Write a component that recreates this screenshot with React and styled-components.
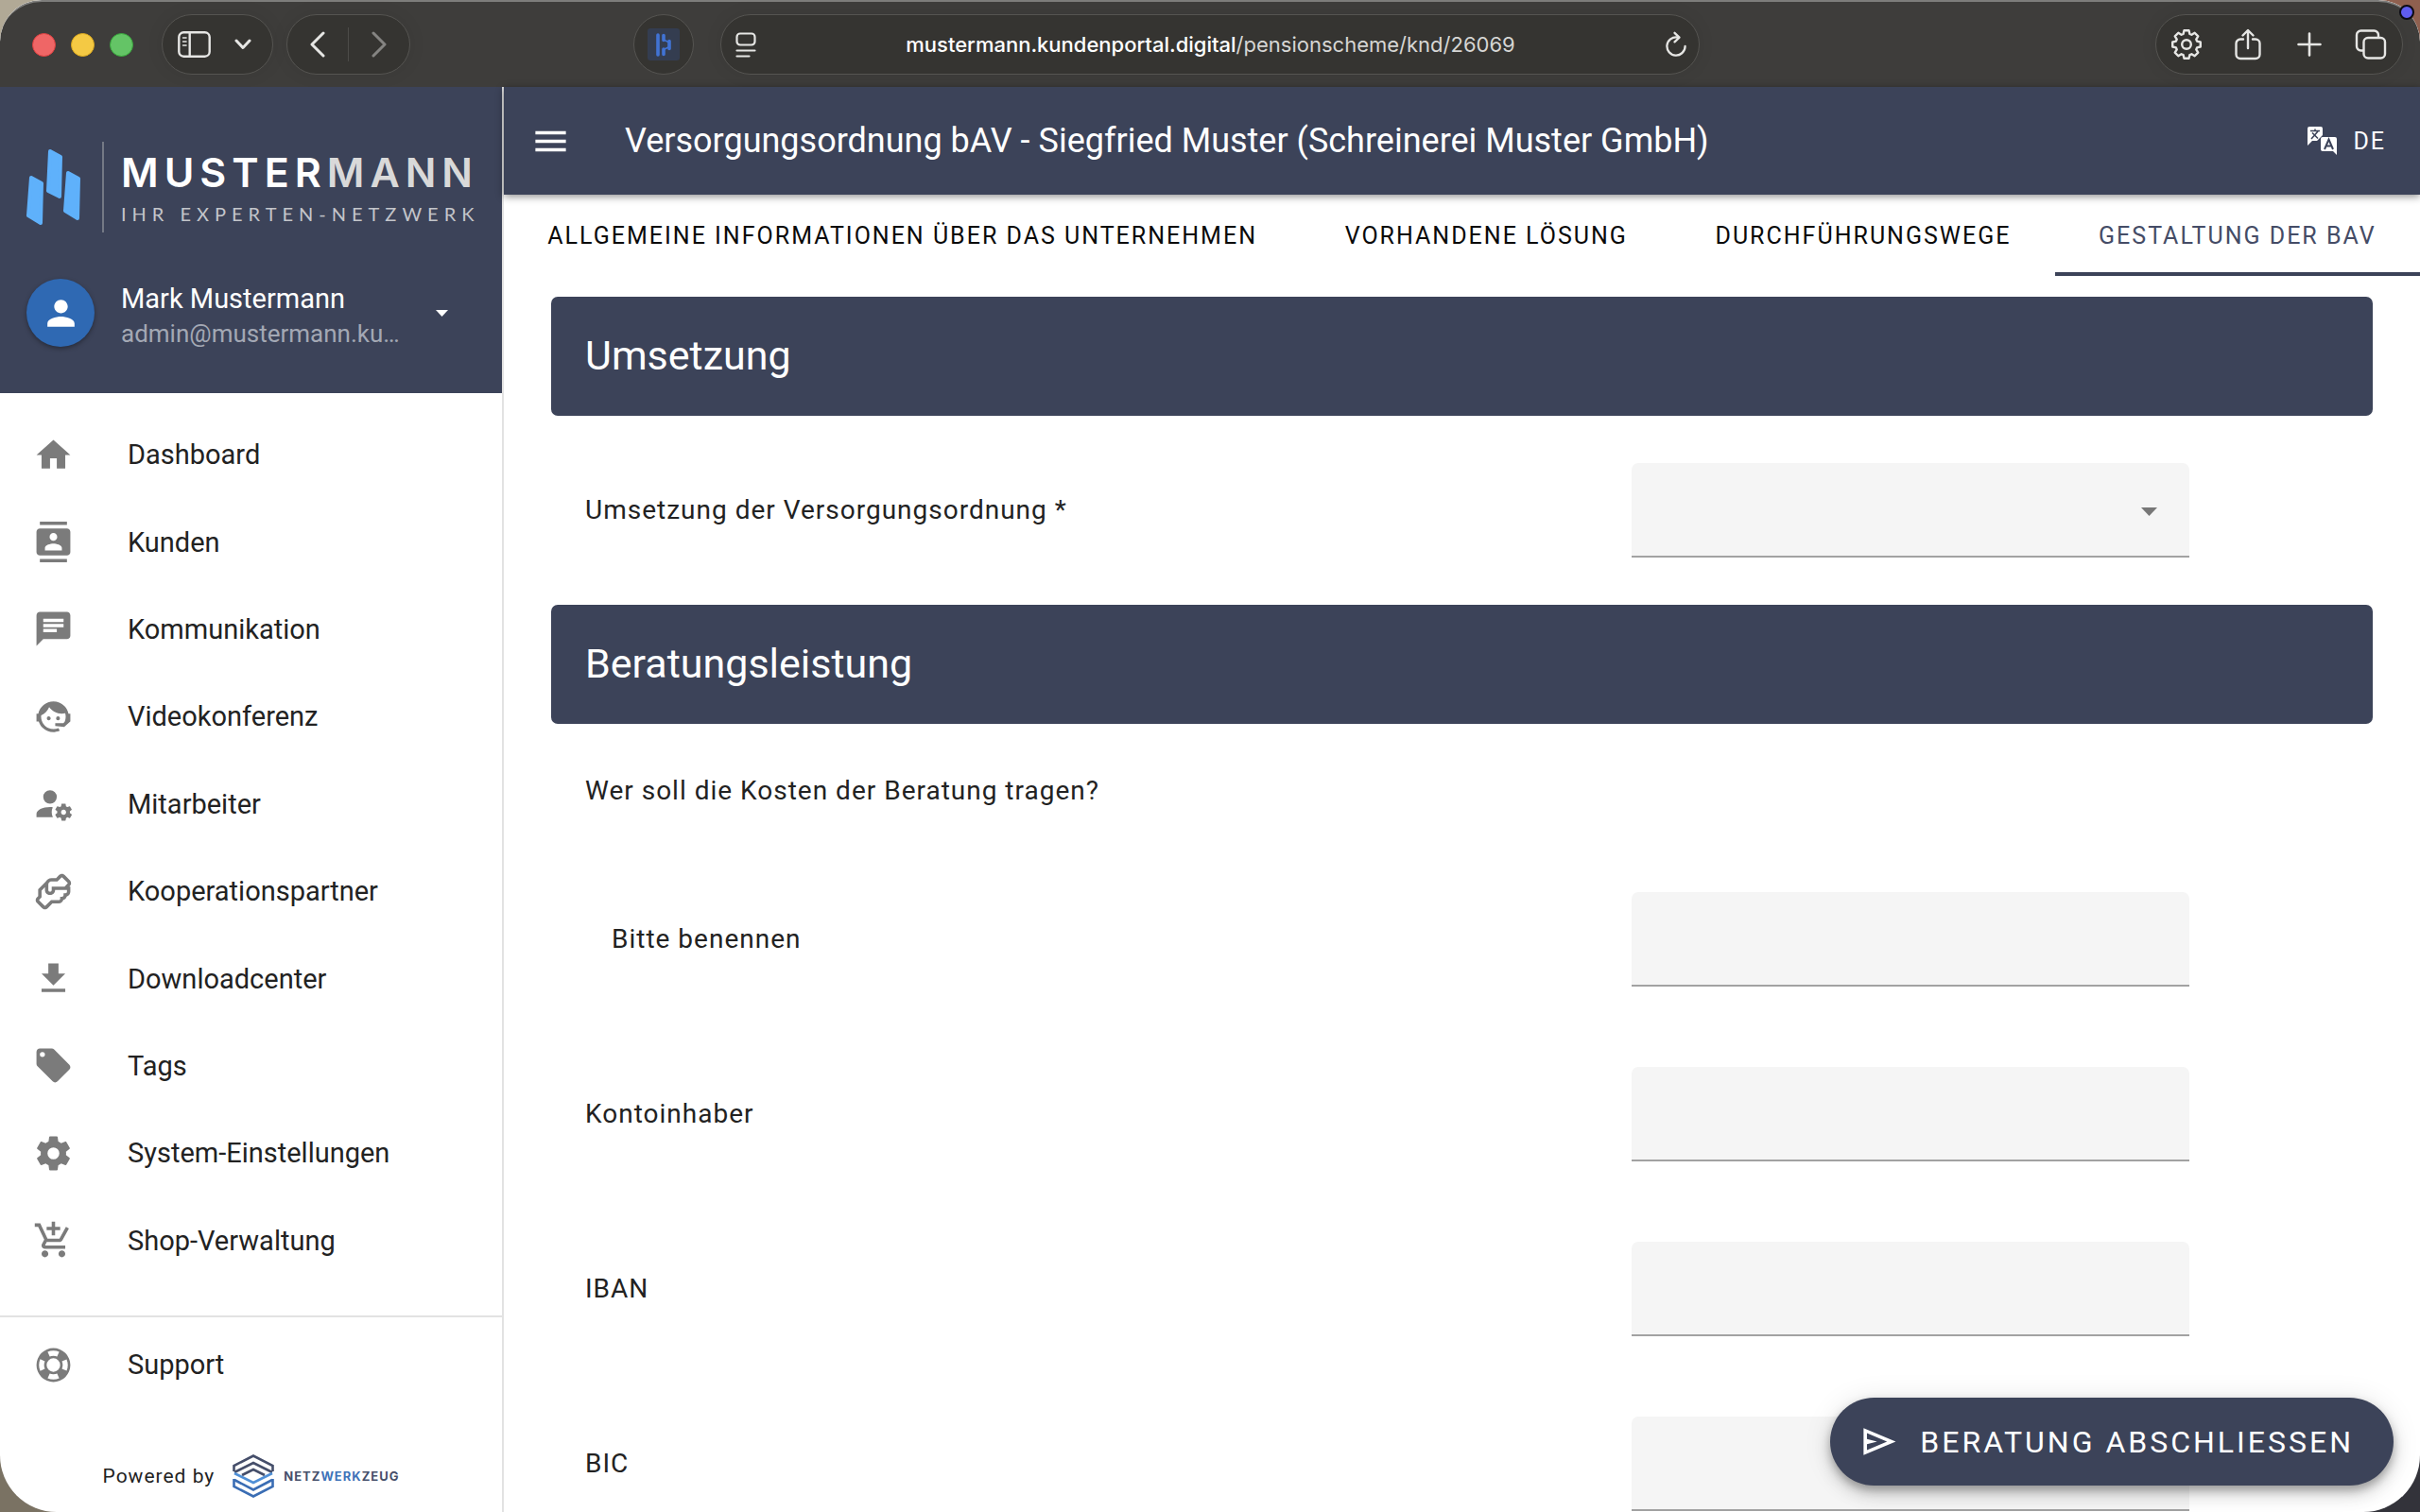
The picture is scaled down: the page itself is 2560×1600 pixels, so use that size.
import React from "react";
import styled, { createGlobalStyle, css } from "styled-components";
import { MdContacts, MdChat, MdAddShoppingCart, MdMenu, MdPerson } from "react-icons/md";

const navy = "#3c4359";
const ink = "#222222";
const iconGrey = "#7b7b7b";
const chrome = "#3e3d3b";

const GlobalStyle = createGlobalStyle`
  *, *::before, *::after { box-sizing: border-box; }
  body {
    margin: 0;
    background: linear-gradient(90deg, #b1a996 0 50%, #8f604f 50% 100%) top / 100% 50% no-repeat,
      linear-gradient(90deg, #7a7263 0 50%, #33333a 50% 100%) bottom / 100% 50% no-repeat;
    font-family: Roboto, "Liberation Sans", sans-serif;
    color: ${ink};
  }
  svg { flex: none; }
  button, input, select { font: inherit; color: inherit; letter-spacing: inherit; }
  button { border: 0; padding: 0; background: none; cursor: pointer; }
`;

/* ---------- window ---------- */

const Window = styled.div`
  position: relative;
  display: flex;
  flex-direction: column;
  height: 100vh;
  overflow: hidden;
  background: #fff;
  border-radius: 44px 44px 60px 60px;
`;

const RecordingDot = styled.span`
  position: fixed;
  top: 5px;
  right: 6px;
  width: 16px;
  height: 16px;
  border: 2px solid #0b0b14;
  border-radius: 50%;
  background: #5f5cf0;
`;

const BrowserBar = styled.header`
  display: grid;
  grid-template-columns: 1fr minmax(0, 1036px) 1fr;
  align-items: center;
  flex: none;
  height: 92px;
  padding: 0 18px 0 34px;
  background: ${chrome};
  border-top: 2px solid #7d7d7b;
  border-radius: 44px 44px 0 0;
  color: #e6e6e4;
`;

const BarSide = styled.div`
  display: flex;
  align-items: center;
  justify-content: ${(p) => (p.$end ? "flex-end" : "flex-start")};
`;

const Lights = styled.div`
  display: flex;
  gap: 16px;
  margin-right: 30px;
`;

const Light = styled.span`
  width: 25px;
  height: 25px;
  border-radius: 50%;
  background: ${(p) => p.$color};
  border: 1px solid ${(p) => p.$edge};
`;

const Pill = styled.div`
  display: flex;
  align-items: center;
  height: 64px;
  padding: ${(p) => p.$pad || "0 16px"};
  gap: ${(p) => p.$gap || 0}px;
  border: 1px solid #555451;
  border-radius: 32px;
  background: #353431;
  box-shadow: 0 0 18px rgba(0, 0, 0, 0.08);
`;

const LeftPill = styled(Pill)`
  margin-right: 14px;
`;

const BarButton = styled.button`
  display: flex;
  justify-content: center;
  min-width: ${(p) => p.$min || 0}px;
  opacity: ${(p) => (p.disabled ? 0.45 : 1)};
`;

const Separator = styled.span`
  width: 1px;
  height: 36px;
  background: #4c4b48;
`;

const Extension = styled.button`
  display: flex;
  align-items: center;
  justify-content: center;
  width: 64px;
  height: 64px;
  margin-left: auto;
  margin-right: 36px;
  border: 1px solid #555451;
  border-radius: 50%;
  background: #353431;
`;

const AddressPill = styled(Pill)`
  justify-content: space-between;
  margin-left: -8px;
  margin-right: 8px;
`;

const Address = styled.button`
  font-family: Inter, "Liberation Sans", sans-serif;
  font-size: 22px;
  line-height: 32px;
  color: #d6d6d4;
  white-space: nowrap;

  b {
    font-weight: 500;
    color: #fff;
  }
`;

const Body = styled.div`
  display: grid;
  grid-template-columns: 533px minmax(0, 1fr);
  flex: 1;
  min-height: 0;
`;

/* ---------- sidebar ---------- */

const Sidebar = styled.aside`
  display: flex;
  flex-direction: column;
  min-height: 0;
  border-right: 2px solid #e2e2e2;
`;

const SidebarHead = styled.div`
  flex: none;
  padding: 58px 20px 50px 28px;
  background: ${navy};
  color: #fff;
`;

const Brand = styled.a`
  display: flex;
  align-items: center;
  height: 96px;
  color: #fff;
  text-decoration: none;
`;

const BrandRule = styled.span`
  flex: none;
  width: 2px;
  height: 96px;
  margin: 0 18px 0 23px;
  background: #747985;
`;

const BrandText = styled.span`
  display: flex;
  flex-direction: column;
  padding-top: 8px;
  font-family: Lato, "Liberation Sans", sans-serif;
  white-space: nowrap;
`;

const BrandName = styled.span`
  font-family: Inter, "Liberation Sans", sans-serif;
  font-size: 43px;
  line-height: 48px;
  letter-spacing: 6px;
  font-weight: 600;

  span { color: #d9d9d9; }
`;

const BrandClaim = styled.span`
  font-size: 20px;
  line-height: 40px;
  letter-spacing: 6px;
  color: #c3c5ca;
`;

const Account = styled.button`
  display: flex;
  align-items: center;
  width: 100%;
  height: 72px;
  margin-top: 49px;
  margin-bottom: -1px;
  text-align: left;
`;

const Avatar = styled.span`
  display: flex;
  align-items: center;
  justify-content: center;
  flex: none;
  width: 72px;
  height: 72px;
  margin-right: 28px;
  border-radius: 50%;
  background: #2f69b3;
  box-shadow: 0 2px 5px rgba(0, 0, 0, 0.35);
`;

const AccountText = styled.span`
  display: flex;
  flex-direction: column;
  width: 300px;
  margin-right: 33px;
  padding-top: 6px;
`;

const AccountName = styled.span`
  font-size: 29px;
  line-height: 38px;
`;

const AccountMail = styled.span`
  font-size: 26px;
  line-height: 36px;
  color: #a3a8b4;
  white-space: nowrap;
`;

const Nav = styled.nav`
  display: grid;
  grid-auto-rows: 1fr;
  flex: 1;
  min-height: 0;
  padding: 19px 0 33px;
`;

const NavLink = styled.a`
  display: flex;
  align-items: center;
  gap: 57px;
  padding-left: 35px;
  font-size: 29px;
  line-height: 40px;
  color: ${ink};
  text-decoration: none;

  svg { color: ${iconGrey}; }
`;

const SidebarFoot = styled.div`
  flex: none;
  border-top: 2px solid #e2e2e2;
  padding: 4px 0 12px;

  ${NavLink} { height: 92px; }
`;

const Powered = styled.div`
  display: flex;
  align-items: center;
  justify-content: center;
  height: 52px;
  margin-top: 46px;
  font-size: 21px;
  letter-spacing: 1px;
  gap: 19px;
`;

const Vendor = styled.a`
  display: flex;
  align-items: center;
  gap: 10px;
  font-family: Inter, "Liberation Sans", sans-serif;
  font-size: 13px;
  font-weight: 700;
  letter-spacing: 1px;
  color: #46506b;
  text-decoration: none;

  span span { color: #3f73b9; }
`;

/* ---------- main ---------- */

const Main = styled.main`
  display: flex;
  flex-direction: column;
  min-width: 0;
  min-height: 0;
`;

const Toolbar = styled.div`
  position: relative;
  display: flex;
  align-items: center;
  flex: none;
  height: 114px;
  padding: 0 36px 0 28px;
  background: ${navy};
  color: #fff;
  box-shadow: 0 2px 8px rgba(0, 0, 0, 0.45);
`;

const MenuButton = styled.button`
  display: flex;
  margin-right: 57px;
  color: #fff;
`;

const PageTitle = styled.h1`
  flex: 1;
  margin: 0;
  font-size: 36px;
  font-weight: 400;
  line-height: 48px;
`;

const Language = styled.button`
  display: flex;
  align-items: center;
  gap: 16px;
  font-size: 25px;
  letter-spacing: 2px;
  color: #fff;
`;

const Tabs = styled.div`
  display: flex;
  flex: none;
  height: 86px;
`;

const Tab = styled.button`
  flex: 1 0 auto;
  padding: 4px 40px 0;
  border-bottom: 4px solid transparent;
  font-size: 25px;
  letter-spacing: 2px;
  text-transform: uppercase;
  white-space: nowrap;
  color: #0a0a0a;

  ${(p) =>
    p["aria-selected"] &&
    css`
      color: #454c66;
      border-bottom-color: ${navy};
    `}
`;

const Form = styled.form`
  flex: 1;
  min-height: 0;
  overflow: hidden;
  padding: 22px 50px 0;
`;

const SectionTitle = styled.h2`
  margin: 0;
  padding: 34px 36px 36px;
  border-radius: 7px;
  background: ${navy};
  color: #fff;
  font-size: 43px;
  font-weight: 400;
  line-height: 56px;
`;

const Row = styled.div`
  display: grid;
  grid-template-columns: 1107fr 590fr 194fr;
  align-items: center;
  height: ${(p) => p.$height}px;
  padding-left: 36px;
  font-size: 28px;
  line-height: 40px;
  letter-spacing: 1px;
`;

const Label = styled.label`
  padding-left: ${(p) => (p.$nested ? 28 : 0)}px;
`;

const Question = styled.p`
  margin: 0;
  padding-top: 6px;
`;

const fieldBox = css`
  width: 100%;
  height: 100px;
  padding: 0 28px;
  border: 0;
  border-bottom: 2px solid #a2a2a2;
  border-radius: 7px 7px 0 0;
  background: #f5f5f5;
  outline: none;
`;

const TextField = styled.input`
  ${fieldBox}
`;

const SelectWrap = styled.div`
  position: relative;

  svg {
    position: absolute;
    top: 47px;
    right: 34px;
    pointer-events: none;
  }
`;

const Select = styled.select`
  ${fieldBox}
  appearance: none;
`;

const FinishButton = styled.button`
  position: absolute;
  right: 28px;
  bottom: 28px;
  display: flex;
  align-items: center;
  gap: 22px;
  height: 93px;
  padding: 0 42px 0 30px;
  border-radius: 47px;
  background: ${navy};
  color: #fff;
  font-size: 32px;
  letter-spacing: 3px;
  text-transform: uppercase;
  box-shadow: 0 5px 9px rgba(0, 0, 0, 0.25), 0 10px 18px rgba(0, 0, 0, 0.14), 0 2px 30px rgba(0, 0, 0, 0.1);
`;

/* ---------- drawings ---------- */

const Glyph = ({ d, size = 43 }) => (
  <svg width={size} height={size} viewBox="0 0 24 24" fill="currentColor" aria-hidden="true">
    <path d={d} />
  </svg>
);

const paths = {
  home: "M10,20V14H14V20H19V12H22L12,3L2,12H5V20H10Z",
  agent:
    "M18.72,14.76C19.07,13.91 19.26,13 19.26,12C19.26,11.28 19.15,10.59 18.96,9.95C18.31,10.1 17.63,10.18 16.92,10.18C13.86,10.18 11.15,8.67 9.5,6.34C8.61,8.5 6.91,10.26 4.77,11.22C4.73,11.47 4.73,11.74 4.73,12A7.27,7.27 0 0,0 12,19.27C13.05,19.27 14.06,19.04 14.97,18.63C15.54,19.72 15.8,20.26 15.78,20.26C14.14,20.81 12.87,21.08 12,21.08C9.58,21.08 7.27,20.13 5.57,18.42C4.53,17.38 3.76,16.11 3.33,14.73H2V10.18H3.09C3.93,6.04 7.6,2.92 12,2.92C14.4,2.92 16.71,3.87 18.42,5.58C19.69,6.84 20.54,8.45 20.89,10.18H22V14.67H22V14.69L22,14.73H21.94L18.38,18L13.08,17.4V15.73H17.91L18.72,14.76M9.27,11.77C9.57,11.77 9.86,11.89 10.07,12.11C10.28,12.32 10.4,12.61 10.4,12.91C10.4,13.21 10.28,13.5 10.07,13.71C9.86,13.92 9.57,14.04 9.27,14.04C8.64,14.04 8.13,13.54 8.13,12.91C8.13,12.28 8.64,11.77 9.27,11.77M14.72,11.77C15.35,11.77 15.85,12.28 15.85,12.91C15.85,13.54 15.35,14.04 14.72,14.04C14.09,14.04 13.58,13.54 13.58,12.91A1.14,1.14 0 0,1 14.72,11.77Z",
  staff:
    "M10 4A4 4 0 0 0 6 8A4 4 0 0 0 10 12A4 4 0 0 0 14 8A4 4 0 0 0 10 4M17 12C16.87 12 16.76 12.09 16.74 12.21L16.55 13.53C16.25 13.66 15.96 13.82 15.7 14L14.46 13.5C14.35 13.5 14.22 13.5 14.15 13.63L13.15 15.36C13.09 15.47 13.11 15.6 13.21 15.68L14.27 16.5C14.25 16.67 14.24 16.83 14.24 17C14.24 17.17 14.25 17.33 14.27 17.5L13.21 18.32C13.12 18.4 13.09 18.53 13.15 18.64L14.15 20.37C14.21 20.5 14.34 20.5 14.46 20.5L15.7 20C15.96 20.18 16.24 20.35 16.55 20.47L16.74 21.79C16.76 21.91 16.86 22 17 22H19C19.11 22 19.22 21.91 19.24 21.79L19.43 20.47C19.73 20.34 20 20.18 20.27 20L21.5 20.5C21.63 20.5 21.76 20.5 21.83 20.37L22.83 18.64C22.89 18.53 22.86 18.4 22.77 18.32L21.7 17.5C21.72 17.33 21.74 17.17 21.74 17C21.74 16.83 21.73 16.67 21.7 16.5L22.76 15.68C22.85 15.6 22.88 15.47 22.82 15.36L21.82 13.63C21.76 13.5 21.63 13.5 21.5 13.5L20.27 14C20 13.82 19.73 13.65 19.42 13.53L19.23 12.21C19.22 12.09 19.11 12 19 12H17M10 14C5.58 14 2 15.79 2 18V20H11.68A7 7 0 0 1 11 17A7 7 0 0 1 11.64 14.09C11.11 14.03 10.56 14 10 14M18 15.5C18.83 15.5 19.5 16.17 19.5 17C19.5 17.83 18.83 18.5 18 18.5C17.16 18.5 16.5 17.83 16.5 17C16.5 16.17 17.17 15.5 18 15.5Z",
  handshake:
    "M21.71 8.71C22.96 7.46 22.39 6 21.71 5.29L18.71 2.29C17.45 1.04 16 1.61 15.29 2.29L13.59 4H11C9.1 4 8 5 7.44 6.15L3 10.59V14.59L2.29 15.29C1.04 16.55 1.61 18 2.29 18.71L5.29 21.71C5.83 22.25 6.41 22.45 6.96 22.45C7.67 22.45 8.32 22.1 8.71 21.71L11.41 19H15C16.7 19 17.56 17.94 17.87 16.9C19 16.6 19.62 15.74 19.87 14.9C21.42 14.5 22 13.03 22 12V9H21.41L21.71 8.71M20 12C20 12.45 19.81 13 19 13L18 13L18 14C18 14.45 17.81 15 17 15L16 15L16 16C16 16.45 15.81 17 15 17H10.59L7.31 20.28C7 20.57 6.82 20.4 6.71 20.29L3.72 17.31C3.43 17 3.6 16.82 3.71 16.71L5 15.41V11.41L7 9.41V11C7 12.21 7.8 14 10 14S13 12.21 13 11H20V12M20.29 7.29L18.59 9H11V11C11 11.45 10.81 12 10 12S9 11.45 9 11V8C9 7.54 9.17 6 11 6H14.41L16.69 3.72C17 3.43 17.18 3.6 17.29 3.71L20.28 6.69C20.57 7 20.4 7.18 20.29 7.29Z",
  download: "M5,20H19V18H5M19,9H15V3H9V9H5L12,16L19,9Z",
  tag: "M5.5,7A1.5,1.5 0 0,1 4,5.5A1.5,1.5 0 0,1 5.5,4A1.5,1.5 0 0,1 7,5.5A1.5,1.5 0 0,1 5.5,7M21.41,11.58L12.41,2.58C12.05,2.22 11.55,2 11,2H4C2.89,2 2,2.89 2,4V11C2,11.55 2.22,12.05 2.59,12.41L11.58,21.41C11.95,21.77 12.45,22 13,22C13.55,22 14.05,21.77 14.41,21.41L21.41,14.41C21.78,14.05 22,13.55 22,13C22,12.44 21.77,11.94 21.41,11.58Z",
  cog: "M12,15.5A3.5,3.5 0 0,1 8.5,12A3.5,3.5 0 0,1 12,8.5A3.5,3.5 0 0,1 15.5,12A3.5,3.5 0 0,1 12,15.5M19.43,12.97C19.47,12.65 19.5,12.33 19.5,12C19.5,11.67 19.47,11.34 19.43,11L21.54,9.37C21.73,9.22 21.78,8.95 21.66,8.73L19.66,5.27C19.54,5.05 19.27,4.96 19.05,5.05L16.56,6.05C16.04,5.66 15.5,5.32 14.87,5.07L14.5,2.42C14.46,2.18 14.25,2 14,2H10C9.75,2 9.54,2.18 9.5,2.42L9.13,5.07C8.5,5.32 7.96,5.66 7.44,6.05L4.95,5.05C4.73,4.96 4.46,5.05 4.34,5.27L2.34,8.73C2.21,8.95 2.27,9.22 2.46,9.37L4.57,11C4.53,11.34 4.5,11.67 4.5,12C4.5,12.33 4.53,12.65 4.57,12.97L2.46,14.63C2.27,14.78 2.21,15.05 2.34,15.27L4.34,18.73C4.46,18.95 4.73,19.03 4.95,18.95L7.44,17.94C7.96,18.34 8.5,18.68 9.13,18.93L9.5,21.58C9.54,21.82 9.75,22 10,22H14C14.25,22 14.46,21.82 14.5,21.58L14.87,18.93C15.5,18.67 16.04,18.34 16.56,17.94L19.05,18.95C19.27,19.03 19.54,18.95 19.66,18.73L21.66,15.27C21.78,15.05 21.73,14.78 21.54,14.63L19.43,12.97Z",
  lifebuoy:
    "M19.79,15.41C20.74,13.24 20.74,10.75 19.79,8.59L17.05,9.83C17.65,11.21 17.65,12.78 17.06,14.17L19.79,15.41M15.42,4.21C13.25,3.26 10.76,3.26 8.59,4.21L9.83,6.94C11.22,6.35 12.79,6.35 14.18,6.95L15.42,4.21M4.21,8.58C3.26,10.76 3.26,13.24 4.21,15.42L6.95,14.17C6.35,12.79 6.35,11.21 6.95,9.82L4.21,8.58M8.59,19.79C10.76,20.74 13.25,20.74 15.42,19.78L14.18,17.05C12.8,17.65 11.22,17.65 9.84,17.06L8.59,19.79M12,2A10,10 0 0,1 22,12A10,10 0 0,1 12,22A10,10 0 0,1 2,12A10,10 0 0,1 12,2M12,8A4,4 0 0,0 8,12A4,4 0 0,0 12,16A4,4 0 0,0 16,12A4,4 0 0,0 12,8Z",
  send: "M3 20V4L22 12L3 20M5 17L16.85 12L5 7V10.5L11 12L5 13.5V17Z",
};

const Stroke = ({ w, h, width = 3, children }) => (
  <svg
    width={w}
    height={h}
    viewBox={`0 0 ${w} ${h}`}
    fill="none"
    stroke="currentColor"
    strokeWidth={width}
    strokeLinecap="round"
    strokeLinejoin="round"
    aria-hidden="true"
  >
    {children}
  </svg>
);

const PanelIcon = () => (
  <Stroke w={35} h={28} width={2.4}>
    <rect x="1.3" y="1.3" width="32.4" height="25.4" rx="5" />
    <path d="M12.7 1.5v25" />
    <path d="M5.6 7h3.4M5.6 11h3.4M5.6 15h3.4" strokeWidth="1.6" />
  </Stroke>
);

const ReaderIcon = () => (
  <Stroke w={22} h={27} width={2.2}>
    <rect x="1.5" y="1.5" width="19" height="12" rx="3.5" />
    <path d="M1.5 19.5h19M1.5 25.5h13" />
  </Stroke>
);

const ReloadIcon = () => (
  <Stroke w={24} h={28} width={2.3}>
    <path d="M13.5 6.5A9.6 9.6 0 1 0 21.6 16" />
    <path d="M10.5 1.8l5 4.8-5 4.8" />
  </Stroke>
);

const GearIcon = () => {
  const points = [];
  const teeth = 8;
  for (let i = 0; i < teeth; i += 1) {
    [[-0.3, 11.6], [-0.17, 15], [0.17, 15], [0.3, 11.6]].forEach(([offset, r]) => {
      const a = (i / teeth) * Math.PI * 2 + offset;
      points.push(`${(17 + r * Math.sin(a)).toFixed(2)},${(17 - r * Math.cos(a)).toFixed(2)}`);
    });
  }
  return (
    <Stroke w={34} h={34} width={2.4}>
      <polygon points={points.join(" ")} />
      <circle cx="17" cy="17" r="4.8" />
    </Stroke>
  );
};

const ShareIcon = () => (
  <Stroke w={28} h={34} width={2.4}>
    <path d="M9 11.5H6a4.5 4.5 0 0 0-4.5 4.5v11.5a4.5 4.5 0 0 0 4.5 4.5h16a4.5 4.5 0 0 0 4.5-4.5v-11.5a4.5 4.5 0 0 0-4.5-4.5h-3" />
    <path d="M14 21V2.5M8.5 7.5L14 2l5.5 5.5" />
  </Stroke>
);

const PlusIcon = () => (
  <Stroke w={26} h={26} width={2.6}>
    <path d="M13 1.5v23M1.5 13h23" />
  </Stroke>
);

const WindowsIcon = () => (
  <Stroke w={34} h={32} width={2.4}>
    <rect x="9.5" y="9" width="22.5" height="21.5" rx="4.5" />
    <path d="M9 22.5H6.5A4.5 4.5 0 0 1 2 18V6a4.5 4.5 0 0 1 4.5-4.5h14A4.5 4.5 0 0 1 25 6v2.5" />
  </Stroke>
);

const ExtensionMark = () => (
  <svg width="34" height="34" viewBox="0 0 34 34" aria-hidden="true">
    <rect width="34" height="34" rx="3" fill="#343d50" />
    <path
      d="M11 7v21M17 7.5v5M17 22v5.5M23 13.5v8"
      stroke="#4173d4"
      strokeWidth="3.6"
      strokeLinecap="round"
      fill="none"
    />
    <path d="M17 12l6 3M17 22.5l6-3" stroke="#4173d4" strokeWidth="1.5" />
  </svg>
);

const BrandMark = () => (
  <svg width="57" height="84" viewBox="0 0 57 84" fill="#5fb1fb" stroke="#5fb1fb" strokeWidth="4" strokeLinejoin="round" aria-hidden="true">
    <path d="M5 32L16 38L15 80L2 72Z" />
    <path d="M25 4L36 10L35 52L23 46Z" />
    <path d="M44 27L55 33L54 75L41 67Z" />
  </svg>
);

const VendorMark = () => (
  <svg width="44" height="48" viewBox="0 0 44 48" fill="none" strokeWidth="2.6" aria-hidden="true">
    <g stroke="#454e6a">
      <path d="M1.5 19V13L22 2.5L42.5 13V19" />
      <path d="M2 20L22 10L42 20" />
      <path d="M10 23L22 17L34 23" />
    </g>
    <g stroke="#3a6db4">
      <path d="M1.5 27V35L22 45.5L42.5 35V27" />
      <path d="M2 28L22 38.5L42 28" />
      <path d="M2 21L22 31L42 21" stroke="#4f8fd6" />
    </g>
  </svg>
);

const TranslateIcon = () => (
  <svg width="33" height="32" viewBox="0 0 33 32" aria-hidden="true">
    <path d="M3 1H15A2 2 0 0 1 17 3V10L11 16H6L1 21V3A2 2 0 0 1 3 1Z" fill="#fff" />
    <path d="M4 5.5H14M9 3.5V5.5M12 6L5 14M6 7.5L12 13.5" stroke={navy} strokeWidth="1.5" fill="none" />
    <path d="M17 12H30A2 2 0 0 1 32 14V31L28 27H17A2 2 0 0 1 15 25V14A2 2 0 0 1 17 12Z" fill="#fff" />
    <path d="M19 25L23.5 14.5L28 25M20.5 21.5H26.5" stroke={navy} strokeWidth="2" fill="none" />
  </svg>
);

const Caret = ({ w, h, color }) => (
  <svg width={w} height={h} viewBox="0 0 10 5" preserveAspectRatio="none" fill={color} aria-hidden="true">
    <path d="M0 0H10L5 5Z" />
  </svg>
);

/* ---------- content ---------- */

const navItems = [
  ["Dashboard", <Glyph d={paths.home} />],
  ["Kunden", <MdContacts size={43} />],
  ["Kommunikation", <MdChat size={43} />],
  ["Videokonferenz", <Glyph d={paths.agent} />],
  ["Mitarbeiter", <Glyph d={paths.staff} />],
  ["Kooperationspartner", <Glyph d={paths.handshake} />],
  ["Downloadcenter", <Glyph d={paths.download} />],
  ["Tags", <Glyph d={paths.tag} />],
  ["System-Einstellungen", <Glyph d={paths.cog} />],
  ["Shop-Verwaltung", <MdAddShoppingCart size={43} />],
];

const tabs = [
  "Allgemeine Informationen über das Unternehmen",
  "Vorhandene Lösung",
  "Durchführungswege",
  "Gestaltung der bAV",
];

const fields = [
  { id: "benennen", label: "Bitte benennen", nested: true },
  { id: "kontoinhaber", label: "Kontoinhaber" },
  { id: "iban", label: "IBAN" },
  { id: "bic", label: "BIC" },
];

export default function App() {
  return (
    <>
      <GlobalStyle />
      <Window>
        <BrowserBar>
          <BarSide>
            <Lights>
              <Light $color="#ef6666" $edge="#dc4040" />
              <Light $color="#f4c944" $edge="#dba91f" />
              <Light $color="#64c466" $edge="#38a83c" />
            </Lights>
            <LeftPill $pad="0 22px 0 16px" $gap={25}>
              <BarButton aria-label="Seitenleiste"><PanelIcon /></BarButton>
              <BarButton aria-label="Tabgruppen">
                <Stroke w={18} h={12}><path d="M2 2l7 7.5 7-7.5" /></Stroke>
              </BarButton>
            </LeftPill>
            <Pill $pad="0 24px" $gap={24}>
              <BarButton aria-label="Zurück">
                <Stroke w={16} h={28}><path d="M14 2L2 14l12 12" /></Stroke>
              </BarButton>
              <Separator />
              <BarButton aria-label="Vorwärts" disabled>
                <Stroke w={16} h={28}><path d="M2 2l12 12L2 26" /></Stroke>
              </BarButton>
            </Pill>
            <Extension aria-label="Erweiterung"><ExtensionMark /></Extension>
          </BarSide>
          <AddressPill $pad="0 12px 0 15px">
            <BarButton aria-label="Seitenmenü"><ReaderIcon /></BarButton>
            <Address><b>mustermann.kundenportal.digital</b>/pensionscheme/knd/26069</Address>
            <BarButton aria-label="Neu laden"><ReloadIcon /></BarButton>
          </AddressPill>
          <BarSide $end>
            <Pill $pad="0 16px 0 15px" $gap={31}>
              <BarButton $min={34} aria-label="Einstellungen"><GearIcon /></BarButton>
              <BarButton $min={34} aria-label="Teilen"><ShareIcon /></BarButton>
              <BarButton $min={34} aria-label="Neuer Tab"><PlusIcon /></BarButton>
              <BarButton $min={34} aria-label="Tabübersicht"><WindowsIcon /></BarButton>
            </Pill>
          </BarSide>
        </BrowserBar>

        <Body>
          <Sidebar>
            <SidebarHead>
              <Brand href="#start">
                <BrandMark />
                <BrandRule />
                <BrandText>
                  <BrandName>MUSTER<span>MANN</span></BrandName>
                  <BrandClaim>IHR EXPERTEN-NETZWERK</BrandClaim>
                </BrandText>
              </Brand>
              <Account>
                <Avatar><MdPerson size={43} /></Avatar>
                <AccountText>
                  <AccountName>Mark Mustermann</AccountName>
                  <AccountMail>admin@mustermann.ku…</AccountMail>
                </AccountText>
                <Caret w={13} h={7} color="#fff" />
              </Account>
            </SidebarHead>
            <Nav>
              {navItems.map(([label, icon]) => (
                <NavLink href={`#${label.toLowerCase()}`} key={label}>
                  {icon}
                  {label}
                </NavLink>
              ))}
            </Nav>
            <SidebarFoot>
              <NavLink href="#support">
                <Glyph d={paths.lifebuoy} />
                Support
              </NavLink>
              <Powered>
                Powered by
                <Vendor href="#netzwerkzeug">
                  <VendorMark />
                  <span>NETZ<span>WERK</span>ZEUG</span>
                </Vendor>
              </Powered>
            </SidebarFoot>
          </Sidebar>

          <Main>
            <Toolbar>
              <MenuButton aria-label="Menü"><MdMenu size={43} /></MenuButton>
              <PageTitle>Versorgungsordnung bAV - Siegfried Muster (Schreinerei Muster GmbH)</PageTitle>
              <Language>
                <TranslateIcon />
                DE
              </Language>
            </Toolbar>
            <Tabs role="tablist">
              {tabs.map((tab, i) => (
                <Tab key={tab} role="tab" type="button" aria-selected={i === tabs.length - 1}>
                  {tab}
                </Tab>
              ))}
            </Tabs>
            <Form>
              <SectionTitle>Umsetzung</SectionTitle>
              <Row $height={200}>
                <Label htmlFor="umsetzung">Umsetzung der Versorgungsordnung *</Label>
                <SelectWrap>
                  <Select id="umsetzung" defaultValue="">
                    <option value="" aria-label="Keine Auswahl" />
                  </Select>
                  <Caret w={17} h={9} color="#777" />
                </SelectWrap>
              </Row>
              <SectionTitle>Beratungsleistung</SectionTitle>
              <Row $height={135}>
                <Question>Wer soll die Kosten der Beratung tragen?</Question>
              </Row>
              {fields.map((field) => (
                <Row $height={185} key={field.id}>
                  <Label htmlFor={field.id} $nested={field.nested}>{field.label}</Label>
                  <TextField id={field.id} type="text" />
                </Row>
              ))}
            </Form>
          </Main>
        </Body>

        <FinishButton type="button">
          <Glyph d={paths.send} />
          Beratung abschließen
        </FinishButton>
      </Window>
      <RecordingDot />
    </>
  );
}
